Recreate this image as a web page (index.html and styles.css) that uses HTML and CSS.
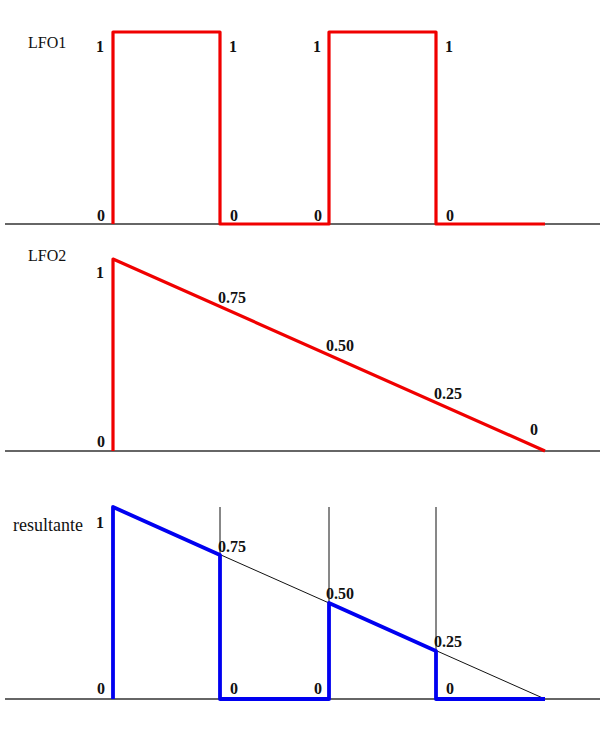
FILE: index.html
```html
<!DOCTYPE html>
<html>
<head>
<meta charset="utf-8">
<link rel="stylesheet" href="styles.css">
</head>
<body>
<svg class="diagram" width="600" height="734" viewBox="0 0 600 734" xmlns="http://www.w3.org/2000/svg">
  <!-- axes -->
  <line class="axis" x1="5" y1="224" x2="600" y2="224"/>
  <line class="axis" x1="5" y1="451" x2="600" y2="451"/>
  <line class="axis" x1="5" y1="699" x2="600" y2="699"/>

  <!-- LFO1 -->
  <path class="wave red" d="M113,224 V32 H220 V224 H329 V32 H436 V224 H545"/>
  <text class="title" x="28" y="48">LFO1</text>
  <text class="val" x="96" y="52">1</text>
  <text class="val" x="229" y="52">1</text>
  <text class="val" x="313" y="52">1</text>
  <text class="val" x="445" y="52">1</text>
  <text class="val" x="97" y="221">0</text>
  <text class="val" x="230" y="221">0</text>
  <text class="val" x="314" y="221">0</text>
  <text class="val" x="446" y="221">0</text>

  <!-- LFO2 -->
  <path class="wave red" d="M113,451 V259 L545,451"/>
  <text class="title" x="28" y="261">LFO2</text>
  <text class="val" x="96" y="278">1</text>
  <text class="val" x="97" y="447">0</text>
  <text class="val" x="218" y="303">0.75</text>
  <text class="val" x="326" y="351">0.50</text>
  <text class="val" x="434" y="399">0.25</text>
  <text class="val" x="530" y="435">0</text>

  <!-- resultante -->
  <line class="thin" x1="113" y1="507" x2="545" y2="699"/>
  <line class="thin" x1="220" y1="507" x2="220" y2="699"/>
  <line class="thin" x1="329" y1="507" x2="329" y2="699"/>
  <line class="thin" x1="436" y1="507" x2="436" y2="699"/>
  <path class="wave blue" d="M113,699 V507 L220,555 V699 H329 V603 L436,651 V699 H545"/>
  <text class="title big" x="13" y="531">resultante</text>
  <text class="val" x="96" y="528">1</text>
  <text class="val" x="218" y="552">0.75</text>
  <text class="val" x="326" y="599">0.50</text>
  <text class="val" x="434" y="647">0.25</text>
  <text class="val" x="97" y="694">0</text>
  <text class="val" x="230" y="694">0</text>
  <text class="val" x="314" y="694">0</text>
  <text class="val" x="446" y="694">0</text>
</svg>
</body>
</html>
```

FILE: styles.css
```css
html, body {
  margin: 0;
  padding: 0;
  background: #ffffff;
}

.diagram {
  display: block;
}

.axis {
  stroke: #333333;
  stroke-width: 1.3;
}

.thin {
  stroke: #111111;
  stroke-width: 1;
}

.wave {
  fill: none;
  stroke-linejoin: round;
  stroke-linecap: butt;
}

.red {
  stroke: #f00000;
  stroke-width: 3.2;
}

.blue {
  stroke: #0000f0;
  stroke-width: 3.8;
}

.title {
  font-family: "Liberation Serif", "Times New Roman", serif;
  font-size: 16px;
  fill: #111111;
}

.title.big {
  font-size: 18px;
}

.val {
  font-family: "Liberation Serif", "Times New Roman", serif;
  font-weight: bold;
  font-size: 16px;
  fill: #111111;
}
```
